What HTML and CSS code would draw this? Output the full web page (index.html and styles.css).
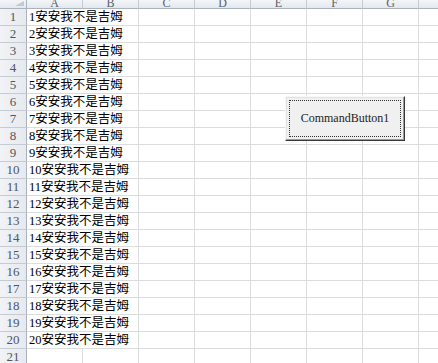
FILE: index.html
```html
<!DOCTYPE html>
<html lang="zh-Hant">
<head>
    <meta charset="UTF-8">
    <meta name="viewport" content="width=device-width, initial-scale=1.0">
    <title>Sheet1</title>
    <link rel="stylesheet" href="styles.css">
</head>
<body>
    <div class="sheet">
        <div class="row head">
            <span class="corner"></span>
            <span class="col">A</span><span class="col">B</span><span class="col">C</span><span class="col">D</span>
            <span class="col">E</span><span class="col">F</span><span class="col">G</span><span class="col">H</span>
        </div>
        <div class="row"><span class="num">1</span><span class="cell wide">1安安我不是吉姆</span><span class="cell"></span><span class="cell"></span><span class="cell"></span><span class="cell"></span><span class="cell"></span><span class="cell"></span></div>
        <div class="row"><span class="num">2</span><span class="cell wide">2安安我不是吉姆</span><span class="cell"></span><span class="cell"></span><span class="cell"></span><span class="cell"></span><span class="cell"></span><span class="cell"></span></div>
        <div class="row"><span class="num">3</span><span class="cell wide">3安安我不是吉姆</span><span class="cell"></span><span class="cell"></span><span class="cell"></span><span class="cell"></span><span class="cell"></span><span class="cell"></span></div>
        <div class="row"><span class="num">4</span><span class="cell wide">4安安我不是吉姆</span><span class="cell"></span><span class="cell"></span><span class="cell"></span><span class="cell"></span><span class="cell"></span><span class="cell"></span></div>
        <div class="row"><span class="num">5</span><span class="cell wide">5安安我不是吉姆</span><span class="cell"></span><span class="cell"></span><span class="cell"></span><span class="cell"></span><span class="cell"></span><span class="cell"></span></div>
        <div class="row"><span class="num">6</span><span class="cell wide">6安安我不是吉姆</span><span class="cell"></span><span class="cell"></span><span class="cell"></span><span class="cell"></span><span class="cell"></span><span class="cell"></span></div>
        <div class="row"><span class="num">7</span><span class="cell wide">7安安我不是吉姆</span><span class="cell"></span><span class="cell"></span><span class="cell"></span><span class="cell"></span><span class="cell"></span><span class="cell"></span></div>
        <div class="row"><span class="num">8</span><span class="cell wide">8安安我不是吉姆</span><span class="cell"></span><span class="cell"></span><span class="cell"></span><span class="cell"></span><span class="cell"></span><span class="cell"></span></div>
        <div class="row"><span class="num">9</span><span class="cell wide">9安安我不是吉姆</span><span class="cell"></span><span class="cell"></span><span class="cell"></span><span class="cell"></span><span class="cell"></span><span class="cell"></span></div>
        <div class="row"><span class="num">10</span><span class="cell wide">10安安我不是吉姆</span><span class="cell"></span><span class="cell"></span><span class="cell"></span><span class="cell"></span><span class="cell"></span><span class="cell"></span></div>
        <div class="row"><span class="num">11</span><span class="cell wide">11安安我不是吉姆</span><span class="cell"></span><span class="cell"></span><span class="cell"></span><span class="cell"></span><span class="cell"></span><span class="cell"></span></div>
        <div class="row"><span class="num">12</span><span class="cell wide">12安安我不是吉姆</span><span class="cell"></span><span class="cell"></span><span class="cell"></span><span class="cell"></span><span class="cell"></span><span class="cell"></span></div>
        <div class="row"><span class="num">13</span><span class="cell wide">13安安我不是吉姆</span><span class="cell"></span><span class="cell"></span><span class="cell"></span><span class="cell"></span><span class="cell"></span><span class="cell"></span></div>
        <div class="row"><span class="num">14</span><span class="cell wide">14安安我不是吉姆</span><span class="cell"></span><span class="cell"></span><span class="cell"></span><span class="cell"></span><span class="cell"></span><span class="cell"></span></div>
        <div class="row"><span class="num">15</span><span class="cell wide">15安安我不是吉姆</span><span class="cell"></span><span class="cell"></span><span class="cell"></span><span class="cell"></span><span class="cell"></span><span class="cell"></span></div>
        <div class="row"><span class="num">16</span><span class="cell wide">16安安我不是吉姆</span><span class="cell"></span><span class="cell"></span><span class="cell"></span><span class="cell"></span><span class="cell"></span><span class="cell"></span></div>
        <div class="row"><span class="num">17</span><span class="cell wide">17安安我不是吉姆</span><span class="cell"></span><span class="cell"></span><span class="cell"></span><span class="cell"></span><span class="cell"></span><span class="cell"></span></div>
        <div class="row"><span class="num">18</span><span class="cell wide">18安安我不是吉姆</span><span class="cell"></span><span class="cell"></span><span class="cell"></span><span class="cell"></span><span class="cell"></span><span class="cell"></span></div>
        <div class="row"><span class="num">19</span><span class="cell wide">19安安我不是吉姆</span><span class="cell"></span><span class="cell"></span><span class="cell"></span><span class="cell"></span><span class="cell"></span><span class="cell"></span></div>
        <div class="row"><span class="num">20</span><span class="cell wide">20安安我不是吉姆</span><span class="cell"></span><span class="cell"></span><span class="cell"></span><span class="cell"></span><span class="cell"></span><span class="cell"></span></div>
        <div class="row"><span class="num">21</span><span class="cell"></span><span class="cell"></span><span class="cell"></span><span class="cell"></span><span class="cell"></span><span class="cell"></span><span class="cell"></span><span class="cell"></span></div>

        <button class="cmd" type="button">CommandButton1</button>
    </div>
</body>
</html>
```

FILE: styles.css
```css
html, body {
    margin: 0;
    padding: 0;
    background: #fff;
    overflow: hidden;
}

.sheet {
    position: relative;
    width: 438px;
    height: 363px;
    overflow: hidden;
}

.row {
    display: grid;
    grid-template-columns: 27px repeat(8, 56px);
    height: 17px;
}

.row > span {
    box-sizing: border-box;
    height: 17px;
    border-right: 1px solid #dadcdd;
    border-bottom: 1px solid #dadcdd;
    overflow: hidden;
    white-space: nowrap;
}

/* column headers, cut off at the top */
.head {
    height: 9px;
}

.head > span {
    height: 9px;
    background: linear-gradient(#f3f5f8, #e4e8ee);
    border-right: 1px solid #c5cbd3;
    border-bottom: 1px solid #a9b2bd;
    text-align: center;
    font-family: "Liberation Serif", serif;
    font-size: 12px;
    line-height: 0px;
    color: #59606b;
}

.head .col {
    padding-top: 3px;
}

.head .corner {
    position: relative;
    border-right: 1px solid #a9b2bd;
}

.head .corner::after {
    content: "";
    position: absolute;
    right: 2px;
    bottom: 2px;
    border-left: 9px solid transparent;
    border-bottom: 5px solid #c3c9d1;
}

.row .num {
    background: linear-gradient(90deg, #f1f3f6, #e6e9ee);
    border-right: 1px solid #a9b2bd;
    border-bottom: 1px solid #c5cbd3;
    text-align: center;
    font-family: "Liberation Serif", serif;
    font-size: 13px;
    line-height: 16px;
    color: #4f5661;
}

.row .cell {
    font-family: "Liberation Serif", "Noto Sans CJK TC", serif;
    font-size: 12.5px;
    line-height: 16px;
    color: #000;
    padding-left: 2px;
}

.row .wide {
    grid-column: span 2;
    overflow: visible;
}

.cmd {
    position: absolute;
    left: 285px;
    top: 96px;
    width: 120px;
    height: 45px;
    margin: 0;
    padding: 0;
    background: #f0f0f0;
    border: 1px solid;
    border-color: #f8f8f8 #3a3a3a #3a3a3a #f8f8f8;
    box-shadow: inset -1px -1px #9a9a9a, inset 1px 1px #e2e2e2;
    font-family: "Liberation Serif", serif;
    font-size: 12px;
    color: #222;
}

.cmd::after {
    content: "";
    position: absolute;
    left: 3px;
    top: 3px;
    right: 3px;
    bottom: 3px;
    border: 1px dotted #333;
}
```
